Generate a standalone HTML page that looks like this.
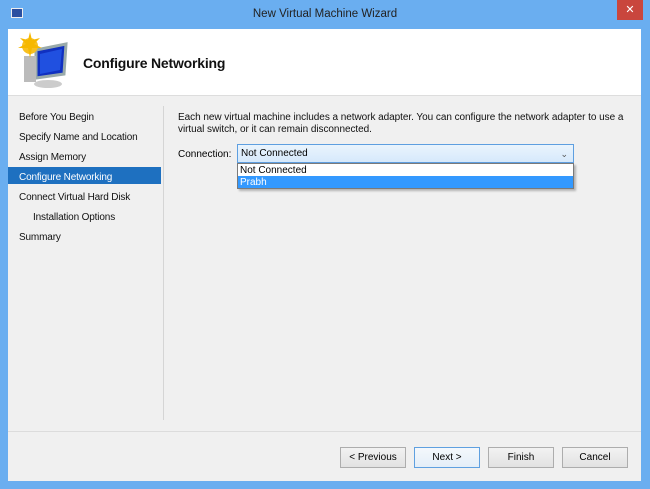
<!DOCTYPE html>
<html><head><style>
*{margin:0;padding:0;box-sizing:border-box}
body{width:650px;height:489px;background:#6aaef0;font-family:"Liberation Sans",sans-serif;font-size:10px;color:#000;position:relative;overflow:hidden}
.abs{position:absolute;white-space:nowrap}
.title{left:0;top:8px;width:650px;text-align:center;font-size:11.5px;color:#222}
.close{left:617px;top:0;width:26px;height:20px;background:#c9463d;color:#fff;text-align:center;font-size:11px;line-height:20px}
.head{left:8px;top:29px;width:633px;height:67px;background:#fff;border-bottom:1px solid #ddd}
.body{left:8px;top:96px;width:633px;height:385px;background:#f0f0f0}
.nav{left:19px;font-size:10px;letter-spacing:-0.15px;color:#111}
.sel{left:8px;top:167px;width:153px;height:17px;background:#1e70c0}
.btn{top:447px;width:66px;height:21px;border:1px solid #adadad;background:linear-gradient(#f2f2f2,#e2e2e2);text-align:center;line-height:19px;font-size:10px}
</style></head><body>
<div class="abs" style="left:11px;top:8px;width:12px;height:10px;background:#2a4fa0;border:1px solid #eee"></div>
<div class="abs title">New Virtual Machine Wizard</div>
<div class="abs close">✕</div>
<div class="abs head">
 <svg class="abs" style="left:6px;top:3px" width="60" height="58">
  <polygon points="22,18 52,12 50,42 22,46" fill="#1030c0" stroke="#9aa" stroke-width="3"/>
  <polygon points="26,22 48,17 46,38 26,42" fill="#2050e0"/>
  <rect x="10" y="24" width="12" height="26" fill="#bbb"/>
  <ellipse cx="34" cy="52" rx="14" ry="4" fill="#ccc"/>
  <circle cx="16" cy="14" r="8" fill="#f8c020"/>
  <polygon points="16,0 18,8 26,6 20,12 28,16 18,16 16,26 14,16 4,16 12,12 6,6 14,8" fill="#f6b800"/>
 </svg>
 <div class="abs" style="left:75px;top:26px;font-size:14px;font-weight:bold;color:#111;letter-spacing:-0.2px">Configure Networking</div>
</div>
<div class="abs body"></div>
<div class="abs sel"></div>
<div class="abs nav" style="top:112px">Before You Begin</div>
<div class="abs nav" style="top:132px">Specify Name and Location</div>
<div class="abs nav" style="top:152px">Assign Memory</div>
<div class="abs nav" style="top:172px;color:#fff">Configure Networking</div>
<div class="abs nav" style="top:192px">Connect Virtual Hard Disk</div>
<div class="abs nav" style="top:212px;left:33px">Installation Options</div>
<div class="abs nav" style="top:232px">Summary</div>
<div class="abs" style="left:163px;top:106px;width:1px;height:314px;background:#d5d5d5"></div>
<div class="abs" style="left:8px;top:431px;width:633px;height:1px;background:#dcdcdc"></div>
<div class="abs" style="left:178px;top:112px;font-size:10px;letter-spacing:-0.05px;line-height:12px;color:#111">Each new virtual machine includes a network adapter. You can configure the network adapter to use a<br>virtual switch, or it can remain disconnected.</div>
<div class="abs" style="left:178px;top:149px;font-size:10px">Connection:</div>
<div class="abs" style="left:237px;top:144px;width:337px;height:19px;border:1px solid #5e9fe0;background:linear-gradient(#eaf4fd,#d6e9fb);font-size:10px;line-height:18px;padding-left:3px">Not Connected<span style="position:absolute;right:5px;top:0;color:#555;font-size:9px">&#8964;</span></div>
<div class="abs" style="left:237px;top:163px;width:337px;height:26px;border:1px solid #7a7a7a;background:#fff;box-shadow:2px 2px 2px rgba(0,0,0,.25)">
 <div style="height:12px;line-height:13px;padding-left:2px;font-size:10px">Not Connected</div>
 <div style="height:12px;line-height:13px;padding-left:2px;font-size:10px;background:#3399ff;color:#fff">Prabh</div>
</div>
<div class="abs btn" style="left:340px">&lt; Previous</div>
<div class="abs btn" style="left:414px;border-color:#5fa0e0;background:linear-gradient(#f4f8fc,#e4eef8)">Next &gt;</div>
<div class="abs btn" style="left:488px">Finish</div>
<div class="abs btn" style="left:562px">Cancel</div>
</body></html>
